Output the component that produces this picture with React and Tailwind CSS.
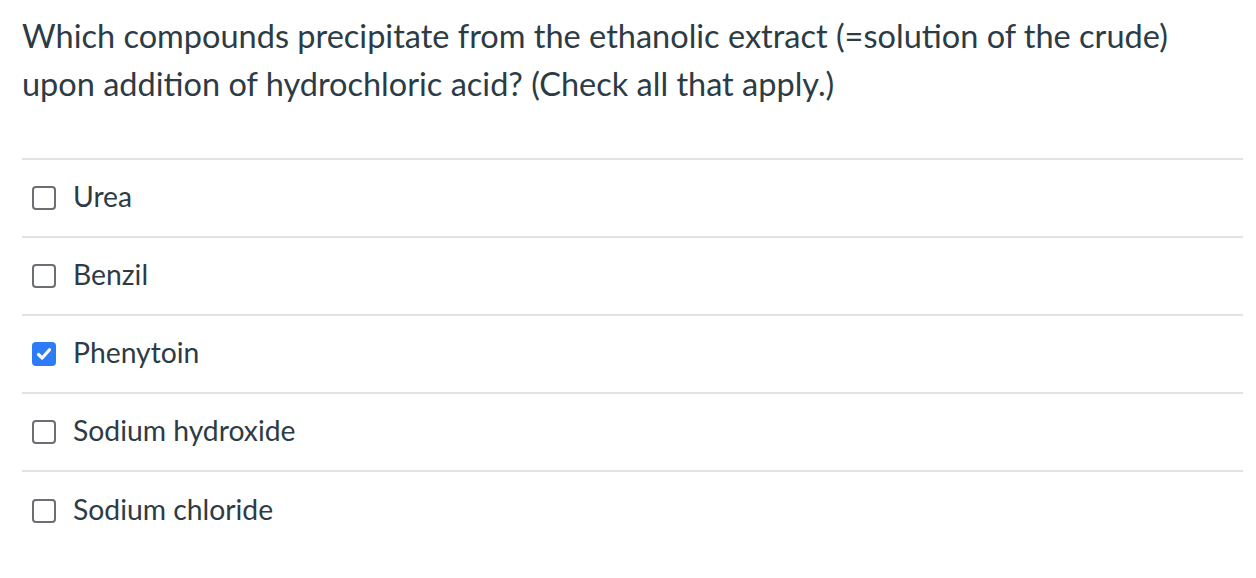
import React from "react";

const options = [
  { label: "Urea", checked: false },
  { label: "Benzil", checked: false },
  { label: "Phenytoin", checked: true },
  { label: "Sodium hydroxide", checked: false },
  { label: "Sodium chloride", checked: false },
];

function Box({ checked }) {
  if (checked) {
    return (
      <span className="flex h-[24px] w-[24px] shrink-0 items-center justify-center rounded-[4px] bg-[#2d7cf6]">
        <svg width="18" height="18" viewBox="0 0 18 18">
          <path d="M3.5 9.5 L7.2 13 L14.5 4.8" fill="none" stroke="white" strokeWidth="3.2" strokeLinecap="round" strokeLinejoin="round" />
        </svg>
      </span>
    );
  }
  return <span className="block h-[24px] w-[24px] shrink-0 rounded-[4px] border-2 border-[#6b6f73] bg-white" />;
}

export default function App() {
  return (
    <div className="min-h-[578px] bg-white pl-[22px] pr-[13px] pt-[12px] text-[#2d3b45]" style={{ fontFamily: "Lato, 'Open Sans', sans-serif" }}>
      <p className="whitespace-nowrap text-[32.5px] leading-[48px]">
        Which compounds precipitate from the ethanolic extract (=solution of the crude)
        <br />
        upon addition of hydrochloric acid? (Check all that apply.)
      </p>
      <div className="mt-[50px] border-t-2 border-[#e2e2e2]">
        {options.map((o, i) => (
          <div
            key={o.label}
            className={`flex h-[78px] items-center gap-[17px] pl-[10px] ${i < options.length - 1 ? "border-b-2 border-[#e2e2e2]" : ""}`}
          >
            <Box checked={o.checked} />
            <span className="pb-[4px] text-[28.3px] leading-none">{o.label}</span>
          </div>
        ))}
      </div>
    </div>
  );
}
